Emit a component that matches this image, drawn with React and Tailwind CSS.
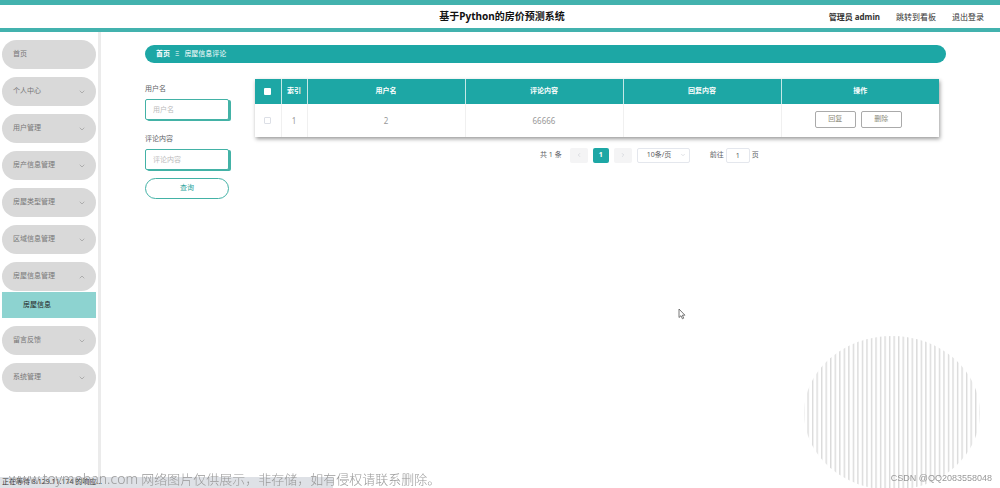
import { useState } from 'react'
import { ChevronDown, ChevronUp, ChevronLeft, ChevronRight } from 'lucide-react'

const menus = [
  { name: '首页' },
  { name: '个人中心', children: ['个人信息'] },
  { name: '用户管理', children: ['用户'] },
  { name: '房产信息管理', children: ['房产信息'] },
  { name: '房屋类型管理', children: ['房屋类型'] },
  { name: '区域信息管理', children: ['区域信息'] },
  { name: '房屋信息管理', children: ['房屋信息'] },
  { name: '留言反馈', children: ['留言反馈'] },
  { name: '系统管理', children: ['系统管理'] },
]

const columns = ['用户名', '评论内容', '回复内容']

const rows = [{ id: 1, username: '2', content: '66666', reply: '' }]

function Header() {
  return (
    <header className="grid h-8 grid-cols-[1fr_auto_1fr] items-center border-t-5 border-b-4 border-[#43b2ae] bg-white">
      <h1 className="col-start-2 pl-1 text-[10px] font-bold text-[#111]">基于Python的房价预测系统</h1>
      <nav className="flex justify-end gap-4 pr-4 text-[8px] text-[#333]">
        <span className="font-bold">管理员 admin</span>
        <a href="#board">跳转到看板</a>
        <a href="#logout">退出登录</a>
      </nav>
    </header>
  )
}

function Sidebar() {
  const [open, setOpen] = useState('房屋信息管理')

  return (
    <aside className="w-[101px] shrink-0 border-r-3 border-[#ebebeb] px-[2px] pt-2">
      <ul className="flex flex-col gap-2">
        {menus.map(m => (
          <li key={m.name}>
            <button
              type="button"
              onClick={() => setOpen(open === m.name ? '' : m.name)}
              className="flex h-[29px] w-full items-center justify-between rounded-full bg-[#d9d9d9] pr-[10px] pl-[11px] text-[7px] text-[#777]"
            >
              {m.name}
              {m.children && (open === m.name
                ? <ChevronUp size={8} strokeWidth={2} className="text-[#999]" />
                : <ChevronDown size={8} strokeWidth={2} className="text-[#999]" />)}
            </button>
            {m.children && open === m.name && (
              <div className="mt-px flex flex-col">
                {m.children.map(c => (
                  <a key={c} href="#house" className="flex h-[26px] items-center bg-[#8dd3d0] pl-[21px] text-[7px] text-[#222]">{c}</a>
                ))}
              </div>
            )}
          </li>
        ))}
      </ul>
    </aside>
  )
}

function Field({ id, label }) {
  return (
    <div className="flex flex-col">
      <label htmlFor={id} className="flex h-5 items-center text-[7px] text-[#606266]">{label}</label>
      <input
        id={id}
        placeholder={label}
        className="h-[21px] w-full rounded-xs border border-[#43b2a6] bg-white px-[7px] text-[7px] shadow-[2px_1px_0_#43b2a6] outline-none placeholder:text-[#bbb]"
      />
    </div>
  )
}

function SearchForm() {
  return (
    <form className="flex w-[84px] shrink-0 flex-col" onSubmit={e => e.preventDefault()}>
      <div className="flex flex-col gap-[9px]">
        <Field id="username" label="用户名" />
        <Field id="content" label="评论内容" />
      </div>
      <button type="submit" className="mt-2 h-[21px] rounded-full border border-[#43b2a6] text-[7px] text-[#27a39b]">查询</button>
    </form>
  )
}

function CommentTable() {
  return (
    <table className="w-full table-fixed border-collapse text-center text-[7px] shadow-[1px_2px_4px_rgba(0,0,0,0.4)]">
      <thead>
        <tr className="h-[25px] bg-[#1da7a5] text-white">
          <th className="w-[26px] border-r border-[#c5e8e6]">
            <input type="checkbox" aria-label="全选" className="mx-auto block size-[7px] appearance-none rounded-[1px] bg-white" />
          </th>
          <th className="w-[26px] border-r border-[#c5e8e6] font-bold">索引</th>
          {columns.map(c => <th key={c} className="border-r border-[#c5e8e6] font-bold">{c}</th>)}
          <th className="font-bold">操作</th>
        </tr>
      </thead>
      <tbody>
        {rows.map(r => (
          <tr key={r.id} className="h-[33px] bg-white text-[8px] text-[#999]">
            <td className="border-r border-[#f0f0f0]">
              <input type="checkbox" aria-label="选择" className="mx-auto block size-[7px] appearance-none rounded-[1px] border border-[#dcdfe6]" />
            </td>
            <td className="border-r border-[#f0f0f0]">{r.id}</td>
            <td className="border-r border-[#f0f0f0]">{r.username}</td>
            <td className="border-r border-[#f0f0f0]">{r.content}</td>
            <td className="border-r border-[#f0f0f0]">{r.reply}</td>
            <td>
              <div className="flex justify-center gap-[5px] pr-1 pb-[2px] text-[7px]">
                <button type="button" className="h-[17px] w-[41px] rounded-xs border border-[#aaa] text-[#8a8a78]">回复</button>
                <button type="button" className="h-[17px] w-[41px] rounded-xs border border-[#aaa] text-[#8a8a78]">删除</button>
              </div>
            </td>
          </tr>
        ))}
      </tbody>
    </table>
  )
}

function Pagination() {
  return (
    <div className="mt-[10px] flex h-4 items-center pl-[285px] text-[7px] text-[#606266]">
      <span className="whitespace-nowrap">共 1 条</span>
      <div className="ml-2 flex gap-[5px]">
        <button type="button" aria-label="上一页" className="flex h-[15px] w-[18px] items-center justify-center rounded-xs bg-[#f4f4f5] text-[#c0c4cc]">
          <ChevronLeft size={6} />
        </button>
        <button type="button" className="h-[15px] w-4 rounded-xs bg-[#1da7a5] font-bold text-white">1</button>
        <button type="button" aria-label="下一页" className="flex h-[15px] w-[18px] items-center justify-center rounded-xs bg-[#f4f4f5] text-[#c0c4cc]">
          <ChevronRight size={6} />
        </button>
      </div>
      <div className="relative ml-[5px]">
        <select aria-label="每页条数" className="block h-[15px] w-[53px] appearance-none rounded-xs border border-[#e4e7ed] pl-[9px] text-[7px]">
          <option>10条/页</option>
          <option>20条/页</option>
        </select>
        <ChevronDown size={6} className="absolute top-1 right-1 text-[#c0c4cc]" />
      </div>
      <label htmlFor="page" className="ml-5 whitespace-nowrap">前往</label>
      <input id="page" defaultValue="1" className="mx-[2px] h-[15px] w-6 rounded-xs border border-[#e4e7ed] text-center outline-none" />
      <span>页</span>
    </div>
  )
}

function StripedCircle() {
  return (
    <svg className="pointer-events-none fixed right-5 bottom-0" width="176" height="152" viewBox="0 0 176 152" aria-hidden="true">
      <defs>
        <pattern id="stripes" x="3.4" width="4.53" height="10" patternUnits="userSpaceOnUse">
          <rect width="1.4" height="10" fill="#dadada" />
        </pattern>
      </defs>
      <ellipse cx="88" cy="77" rx="88" ry="77" fill="url(#stripes)" />
    </svg>
  )
}

function Cursor() {
  return (
    <svg className="pointer-events-none fixed top-[308px] left-[678px]" width="8" height="12" viewBox="0 0 8 12" aria-hidden="true">
      <path d="M1 1v8.5l2-1.8 1.4 3.1 1.3-.6-1.3-3h2.5z" fill="#fff" stroke="#555" strokeWidth=".8" />
    </svg>
  )
}

export default function App() {
  return (
    <div className="flex min-h-screen flex-col bg-white font-['Noto_Sans','Noto_Sans_CJK_SC',sans-serif]">
      <Header />
      <div className="flex grow">
        <Sidebar />
        <main className="min-w-0 grow pt-[13px] pr-[54px] pl-11">
          <nav className="flex h-[18px] items-center gap-[5px] rounded-full bg-[#1da7a5] pl-[11px] text-[7px] text-white">
            <a href="#home" className="font-bold">首页</a>
            <span>Ξ</span>
            <span>房屋信息评论</span>
          </nav>
          <div className="flex gap-[26px] pt-4 pr-[7px]">
            <SearchForm />
            <section className="min-w-0 grow">
              <CommentTable />
              <Pagination />
            </section>
          </div>
        </main>
      </div>

      <StripedCircle />
      <Cursor />
      <div className="fixed bottom-0 left-0 flex h-[11px] w-1/3 items-center bg-[#dee1e6] pl-[2px] text-[7px] text-[#333]">
        正在等待 8.129.11.174 的响应...
      </div>
      <p className="fixed bottom-0 left-[9px] text-[13px] leading-[17px] font-light whitespace-nowrap text-[#999]">
        <span className="text-[14px]">www.toymoban.com</span> 网络图片仅供展示，非存储，如有侵权请联系删除。
      </p>
      <p className="fixed right-2 bottom-1 font-['Liberation_Sans',sans-serif] text-[9px] leading-3 text-[#999]">CSDN @QQ2083558048</p>
    </div>
  )
}
